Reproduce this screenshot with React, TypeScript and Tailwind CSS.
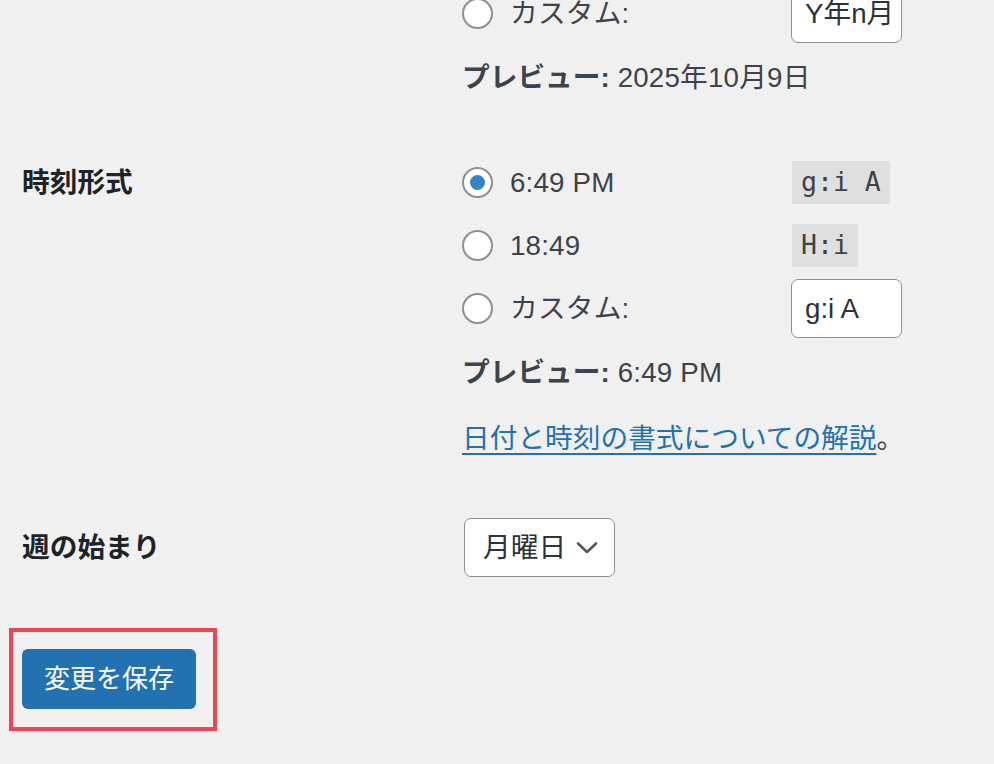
import React from "react";

const Radio = ({ checked = false }: { checked?: boolean }) => (
  <span className="w-[31px] h-[31px] shrink-0 rounded-full border-2 border-[#8c8f94] bg-white flex items-center justify-center">
    {checked && <span className="w-[15px] h-[15px] rounded-full bg-[#3582c4]" />}
  </span>
);

const Code = ({ children }: { children: React.ReactNode }) => (
  <code className="h-[43px] px-[9px] flex items-center bg-[#dfdfe0] text-[#3c434a] text-[26.5px] font-['DejaVu_Sans_Mono',monospace] whitespace-pre">
    {children}
  </code>
);

const TextInput = ({ value }: { value: string }) => (
  <div className="-ml-px w-[111px] h-[59px] flex items-center pl-[13px] border border-[#8c8f94] rounded-[7px] bg-white text-[#2c3338]">
    {value}
  </div>
);

const OptionRow = ({
  checked,
  label,
  right,
}: {
  checked?: boolean;
  label: string;
  right: React.ReactNode;
}) => (
  <div className="h-[63px] flex items-center">
    <div className="w-[330px] flex items-center gap-[17px]">
      <Radio checked={checked} />
      <span className="pt-px tracking-[0.2px]">{label}</span>
    </div>
    {right}
  </div>
);

const Preview = ({ value }: { value: string }) => (
  <p className="mt-[10px] h-[44px] flex items-center pt-px">
    <span className="font-bold">プレビュー:</span>
    <span className="ml-[8px] tracking-[0.2px]">{value}</span>
  </p>
);

export default function App() {
  return (
    <div className="h-[764px] overflow-hidden bg-[#f0f0f1] text-[#3c434a] text-[27.7px] leading-none font-['Liberation_Sans','Noto_Sans_CJK_JP',sans-serif]">
      {/* tail of date format */}
      <div className="flex pl-[22px] -mt-[18px]">
        <div className="w-[440px]" />
        <div>
          <OptionRow label="カスタム:" right={<TextInput value="Y年n月" />} />
          <Preview value="2025年10月9日" />
        </div>
      </div>

      {/* time format */}
      <div className="flex pl-[22px] mt-[52px]">
        <div className="w-[440px] h-[63px] flex items-center font-bold text-[#1d2327]">時刻形式</div>
        <div>
          <OptionRow checked label="6:49 PM" right={<Code>g:i A</Code>} />
          <OptionRow label="18:49" right={<Code>H:i</Code>} />
          <OptionRow label="カスタム:" right={<TextInput value="g:i A" />} />
          <Preview value="6:49 PM" />
          <p className="mt-[23px] h-[44px] flex items-center">
            <a href="#" className="text-[#2271b1] underline decoration-2 underline-offset-[5px]">
              日付と時刻の書式についての解説
            </a>
            <span>。</span>
          </p>
        </div>
      </div>

      {/* start of week */}
      <div className="flex items-center pl-[22px] mt-[57px]">
        <div className="w-[442px] font-bold text-[#1d2327]">週の始まり</div>
        <div className="w-[151px] h-[59px] flex items-center justify-between pl-[18px] pr-[16px] border border-[#8c8f94] rounded-[7px] bg-white text-[#2c3338]">
          <span>月曜日</span>
          <svg width="22" height="14" viewBox="0 0 22 14" fill="none">
            <path d="M2 2.5 L11 11 L20 2.5" stroke="#50575e" strokeWidth="2.6" strokeLinecap="round" strokeLinejoin="round" />
          </svg>
        </div>
      </div>

      {/* submit */}
      <div className="ml-[9px] mt-[51px] w-fit border-4 border-[#ef4452] pl-[9px] pr-[17px] pt-[17px] pb-[18px]">
        <button className="w-[174px] h-[60px] rounded-[6px] bg-[#2271b1] text-white text-[26px] flex items-center justify-center">
          変更を保存
        </button>
      </div>
    </div>
  );
}
